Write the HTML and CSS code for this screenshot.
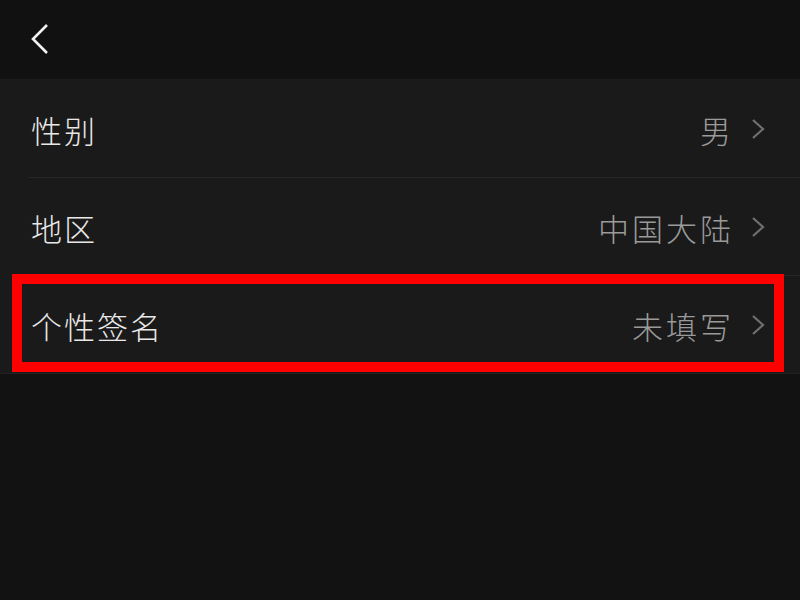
FILE: index.html
```html
<!DOCTYPE html>
<html lang="zh-CN">
<head>
    <meta charset="UTF-8">
    <meta name="viewport" content="width=device-width, initial-scale=1.0">
    <title>个人信息</title>
    <link rel="stylesheet" href="styles.css">
</head>
<body>

    <div class="topbar">
        <svg class="back" width="22" height="32" viewBox="0 0 22 32">
            <path d="M18 2 L4 16 L18 30" fill="none" stroke="#f2f2f2" stroke-width="2.6"/>
        </svg>
    </div>

    <div class="list">
        <div class="row">
            <span class="label">性别</span>
            <span class="value">男</span>
            <svg class="arrow" width="16" height="22" viewBox="0 0 16 22">
                <path d="M3 2 L13 11 L3 20" fill="none" stroke="#707070" stroke-width="2.2"/>
            </svg>
        </div>
        <div class="row">
            <span class="label">地区</span>
            <span class="value">中国大陆</span>
            <svg class="arrow" width="16" height="22" viewBox="0 0 16 22">
                <path d="M3 2 L13 11 L3 20" fill="none" stroke="#707070" stroke-width="2.2"/>
            </svg>
        </div>
        <div class="row last marked">
            <span class="label">个性签名</span>
            <span class="value">未填写</span>
            <svg class="arrow" width="16" height="22" viewBox="0 0 16 22">
                <path d="M3 2 L13 11 L3 20" fill="none" stroke="#707070" stroke-width="2.2"/>
            </svg>
        </div>
    </div>

</body>
</html>
```

FILE: styles.css
```css
* {
    margin: 0;
    padding: 0;
    box-sizing: border-box;
}

body {
    font-family: "Noto Sans CJK SC", "Noto Sans", sans-serif;
    background-color: #121212;
    color: #e6e6e6;
    height: 600px;
    overflow: hidden;
}

.topbar {
    height: 80px;
    background-color: #111111;
    display: flex;
    align-items: center;
    padding-left: 29px;
    border-bottom: 1px solid #1c1c1c;
}

.back {
    display: block;
    margin-top: -1px;
}

.list {
    background-color: #1a1a1a;
}

.row {
    position: relative;
    height: 98px;
    display: flex;
    align-items: center;
    padding: 0 34px 0 31px;
}

.row::before {
    content: "";
    position: absolute;
    left: 28px;
    right: 0;
    bottom: 0;
    height: 1px;
    background-color: #262626;
}

.row.last::before {
    left: 0;
    background-color: #222222;
}

.label {
    flex: 1;
    font-size: 31px;
    font-weight: 300;
    color: #e8e8e8;
    letter-spacing: 2px;
}

.value {
    font-size: 31px;
    font-weight: 300;
    color: #9a9a9a;
    letter-spacing: 3px;
    margin-right: 16px;
}

.arrow {
    display: block;
}

/* red annotation box */
.marked::after {
    content: "";
    position: absolute;
    left: 12px;
    right: 16px;
    top: -2px;
    bottom: 2px;
    border: 10px solid #ff0000;
}
```
